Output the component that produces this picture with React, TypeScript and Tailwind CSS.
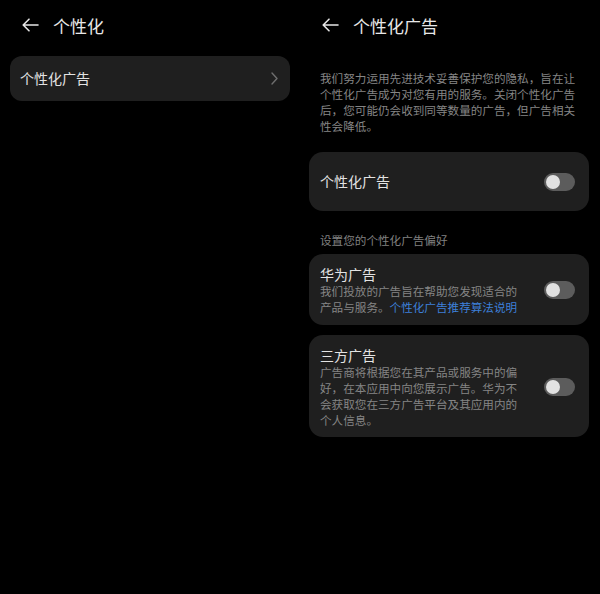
import React from "react";

const font = { fontFamily: '"Noto Sans CJK SC", "Noto Sans", sans-serif' };

function Arrow() {
  return (
    <svg width="17" height="14" viewBox="0 0 17 14" fill="none" stroke="#e6e6e6" strokeWidth="1.6" strokeLinecap="round" strokeLinejoin="round">
      <path d="M16 7H1.5M7 1.2L1.2 7L7 12.8" />
    </svg>
  );
}

function Toggle() {
  return (
    <div className="w-[31px] h-[18px] rounded-full bg-[#5c5c5c] flex items-center px-[2px] shrink-0">
      <div className="w-[14px] h-[14px] rounded-full bg-[#e2e2e2]" />
    </div>
  );
}

export default function App() {
  return (
    <div className="flex w-[600px] h-[594px] bg-black" style={font}>
      <div className="w-[300px] flex flex-col">
        <div className="h-[50px] flex items-center pl-[22px] gap-[14px]">
          <Arrow />
          <span className="text-[17px] text-[#e8e8e8] leading-none">个性化</span>
        </div>
        <div className="mx-[10px] mt-[6px] h-[45px] rounded-[12px] bg-[#1f1f1f] flex items-center justify-between pl-[10px] pr-[12px]">
          <span className="text-[14px] text-[#e3e3e3]">个性化广告</span>
          <svg width="7" height="13" viewBox="0 0 7 13" fill="none" stroke="#6e6e6e" strokeWidth="1.4" strokeLinecap="round" strokeLinejoin="round">
            <path d="M1 1l5 5.5L1 12" />
          </svg>
        </div>
      </div>
      <div className="w-[300px] flex flex-col">
        <div className="h-[50px] flex items-center pl-[22px] gap-[14px]">
          <Arrow />
          <span className="text-[17px] text-[#e8e8e8] leading-none">个性化广告</span>
        </div>
        <div className="pl-[20px] mt-[20px] text-[11.6px] leading-[16px] text-[#858585]">
          <div>我们努力运用先进技术妥善保护您的隐私，旨在让</div>
          <div>个性化广告成为对您有用的服务。关闭个性化广告</div>
          <div>后，您可能仍会收到同等数量的广告，但广告相关</div>
          <div>性会降低。</div>
        </div>
        <div className="ml-[9px] mr-[11px] mt-[18px] h-[59px] rounded-[14px] bg-[#1f1f1f] flex items-center justify-between pl-[11px] pr-[14px]">
          <span className="text-[14px] text-[#e3e3e3]">个性化广告</span>
          <Toggle />
        </div>
        <div className="pl-[20px] mt-[21px] text-[11.6px] leading-[16px] text-[#808080]">设置您的个性化广告偏好</div>
        <div className="ml-[9px] mr-[11px] mt-[6px] rounded-[14px] bg-[#1f1f1f] flex items-center justify-between pl-[11px] pr-[14px] pt-[11px] pb-[10px]">
          <div className="flex flex-col">
            <span className="text-[14px] leading-[18px] text-[#e3e3e3]">华为广告</span>
            <div className="text-[11.6px] leading-[16px] text-[#858585]">
              <div>我们投放的广告旨在帮助您发现适合的</div>
              <div>
                产品与服务。<span className="text-[#3d7fd9]">个性化广告推荐算法说明</span>
              </div>
            </div>
          </div>
          <Toggle />
        </div>
        <div className="ml-[9px] mr-[11px] mt-[10px] rounded-[14px] bg-[#1f1f1f] flex items-center justify-between pl-[11px] pr-[14px] pt-[11px] pb-[9px]">
          <div className="flex flex-col">
            <span className="text-[14px] leading-[18px] text-[#e3e3e3]">三方广告</span>
            <div className="text-[11.6px] leading-[16px] text-[#858585]">
              <div>广告商将根据您在其产品或服务中的偏</div>
              <div>好，在本应用中向您展示广告。华为不</div>
              <div>会获取您在三方广告平台及其应用内的</div>
              <div>个人信息。</div>
            </div>
          </div>
          <Toggle />
        </div>
      </div>
    </div>
  );
}
